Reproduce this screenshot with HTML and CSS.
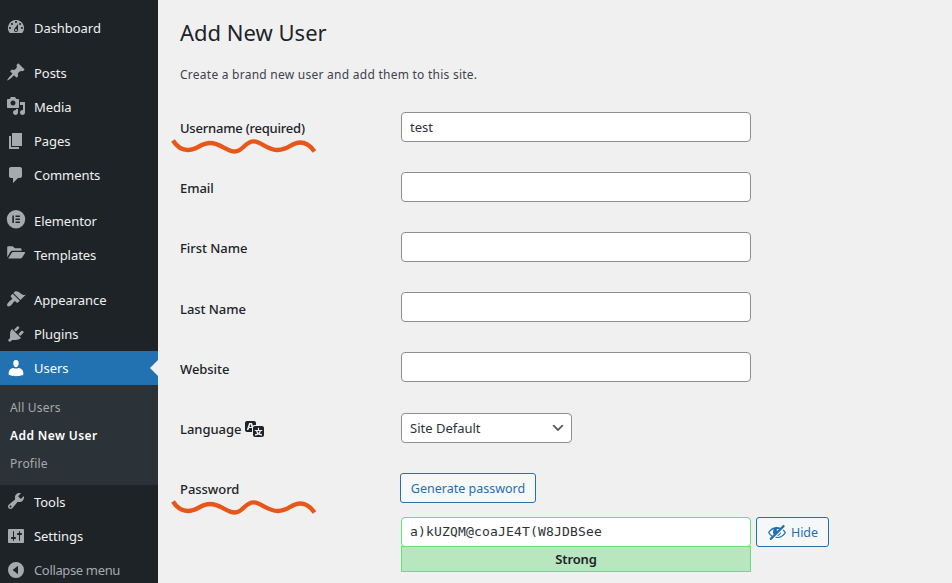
FILE: index.html
```html
<!DOCTYPE html>
<html lang="en">
<head>
    <meta charset="UTF-8">
    <meta name="viewport" content="width=device-width, initial-scale=1.0">
    <title>Add New User</title>
    <link rel="stylesheet" href="styles.css">
</head>
<body>
    <div class="wrapper">
        <!-- Admin menu -->
        <nav class="menu">
            <a class="menu-item">
                <svg class="icon" viewBox="0 0 20 20"><path d="M3.76 16h12.48A7.998 7.998 0 0 0 10 3a7.998 7.998 0 0 0-6.24 13zM10 4c.55 0 1 .45 1 1s-.45 1-1 1-1-.45-1-1 .45-1 1-1zM6 6c.55 0 1 .45 1 1s-.45 1-1 1-1-.45-1-1 .45-1 1-1zm8 0c.55 0 1 .45 1 1s-.45 1-1 1-1-.45-1-1 .45-1 1-1zm-5.37 5.55L12 7v6c0 1.1-.9 2-2 2s-2-.9-2-2c0-.57.24-1.08.63-1.45zM4 10c.55 0 1 .45 1 1s-.45 1-1 1-1-.45-1-1 .45-1 1-1zm12 0c.55 0 1 .45 1 1s-.45 1-1 1-1-.45-1-1 .45-1 1-1zm-5 3c0-.55-.45-1-1-1s-1 .45-1 1 .45 1 1 1 1-.45 1-1z"/></svg>
                <span>Dashboard</span>
            </a>
            <a class="menu-item group-start">
                <svg class="icon" viewBox="0 0 20 20"><path d="M10.44 3.02l1.82-1.82 6.36 6.35-1.83 1.82c-1.05-.68-2.48-.57-3.41.36l-.75.75c-.92.93-1.04 2.35-.35 3.41l-1.83 1.82-2.41-2.41-2.8 2.79c-.42.42-3.38 2.71-3.8 2.29s1.86-3.39 2.28-3.81l2.79-2.79L4.1 9.36l1.83-1.82c1.05.69 2.48.57 3.4-.36l.75-.75c.93-.92 1.05-2.35.36-3.41z"/></svg>
                <span>Posts</span>
            </a>
            <a class="menu-item">
                <svg class="icon" viewBox="0 0 20 20"><path d="M13 11V4c0-.55-.45-1-1-1h-1.67L9 1H5L3.67 3H2c-.55 0-1 .45-1 1v7c0 .55.45 1 1 1h10c.55 0 1-.45 1-1zM7 4.5c1.38 0 2.5 1.12 2.5 2.5S8.38 9.5 7 9.5 4.5 8.38 4.5 7 5.62 4.5 7 4.5zM14 6h5v10.5c0 1.38-1.12 2.5-2.5 2.5S14 17.88 14 16.5s1.12-2.5 2.5-2.5c.17 0 .34.02.5.05V9h-3V6zm-4 8.05V13h2v3.5c0 1.38-1.12 2.5-2.5 2.5S7 17.88 7 16.5 8.12 14 9.5 14c.17 0 .34.02.5.05z"/></svg>
                <span>Media</span>
            </a>
            <a class="menu-item">
                <svg class="icon low" viewBox="0 0 20 20"><path d="M6 15V2h10v13H6zm-1 1h8v2H3V5h2v11z"/></svg>
                <span>Pages</span>
            </a>
            <a class="menu-item">
                <svg class="icon low" viewBox="0 0 20 20"><path d="M5 2h9c1.1 0 2 .9 2 2v7c0 1.1-.9 2-2 2h-2l-5 5v-5H5c-1.1 0-2-.9-2-2V4c0-1.1.9-2 2-2z"/></svg>
                <span>Comments</span>
            </a>
            <a class="menu-item group-start wide">
                <svg class="icon" viewBox="0 0 20 20"><path fill-rule="evenodd" d="M10 0a9.2 9.2 0 1 0 0 18.4A9.2 9.2 0 0 0 10 0zM6.3 5.5h1.6v7.6H6.3zm3.2 0h4.4v1.5H9.5zm0 3.05h4.4v1.5H9.5zm0 3.05h4.4v1.5H9.5z"/></svg>
                <span>Elementor</span>
            </a>
            <a class="menu-item">
                <svg class="icon" viewBox="0 0 20 20"><path d="M1.2 13.2V3.6c0-.8.5-1.3 1.3-1.3h4.2l2.1 2h5.4c.8 0 1.3.5 1.3 1.3v1.1H6.7c-1 0-1.8.5-2.4 1.3zM2.2 14.4l3.6-5.7c.3-.5.7-.7 1.3-.7h11.4c.6 0 .8.4.5.9l-2.8 4.7c-.3.5-.7.8-1.3.8z"/></svg>
                <span>Templates</span>
            </a>
            <a class="menu-item group-start">
                <svg class="icon" viewBox="0 0 20 20"><path d="M14.48 11.06L7.41 3.99l1.5-1.5c.5-.56 2.3-.47 3.51.32 1.21.8 1.43 1.28 2.91 2.1 1.18.64 2.45 1.26 4.45.85zm-.71.71L6.7 4.7 4.93 6.47c-.39.39-.39 1.02 0 1.41l1.06 1.06c.39.39.39 1.03 0 1.42-.6.6-1.43 1.11-2.21 1.69-.35.26-.7.53-1.01.84C1.43 14.23.4 16.08 1.4 17.07c.99 1 2.84-.03 4.18-1.36.31-.31.58-.66.85-1.02.57-.78 1.08-1.61 1.69-2.21.39-.39 1.02-.39 1.41 0l1.06 1.06c.39.39 1.02.39 1.41 0z"/></svg>
                <span>Appearance</span>
            </a>
            <a class="menu-item">
                <svg class="icon low" viewBox="0 0 20 20"><path d="M13.11 4.36L9.87 7.6 8 5.73l3.24-3.24c.35-.34 1.05-.2 1.56.32.52.51.66 1.21.31 1.55zm-8 1.77l.91-1.12 9.01 9.01-1.19.84c-.71.71-2.63 1.16-3.82 1.16H6.14L4.9 17.26c-.59.59-1.54.59-2.12 0-.59-.58-.59-1.53 0-2.12l1.24-1.24v-3.88c0-1.13.4-3.19 1.09-3.89zm7.26 3.97l3.24-3.24c.34-.35 1.04-.21 1.55.31.52.51.66 1.21.31 1.55l-3.24 3.25z"/></svg>
                <span>Plugins</span>
            </a>
            <a class="menu-item current">
                <svg class="icon low" viewBox="0 0 20 20"><path d="M10 9.25c-2.27 0-2.73-3.44-2.73-3.44C7 4.02 7.82 2 9.97 2c2.16 0 2.98 2.02 2.71 3.81 0 0-.41 3.44-2.68 3.44zM7.2 9.9Q10 11.2 12.8 9.9C15.2 10 17.3 12.3 17.3 14.53v2.49s-3.65 1.13-7.3 1.13-7.3-1.13-7.3-1.13v-2.49c0-2.25 2-4.48 4.5-4.63z"/></svg>
                <span>Users</span>
            </a>
            <div class="submenu">
                <a>All Users</a>
                <a class="active">Add New User</a>
                <a>Profile</a>
            </div>
            <a class="menu-item">
                <svg class="icon" viewBox="0 0 20 20"><path d="M16.68 9.77c-1.34 1.34-3.3 1.67-4.95.99l-5.41 6.52c-.99.99-2.59.99-3.58 0s-.99-2.59 0-3.57l6.52-5.42c-.68-1.65-.35-3.61.99-4.95 1.28-1.28 3.12-1.62 4.72-1.06l-2.89 2.89 2.82 2.82 2.86-2.87c.53 1.58.18 3.39-1.08 4.65zM3.81 16.21c.4.39 1.04.39 1.43 0 .4-.4.4-1.04 0-1.43-.39-.4-1.03-.4-1.43 0-.39.39-.39 1.03 0 1.43z"/></svg>
                <span>Tools</span>
            </a>
            <a class="menu-item">
                <svg class="icon low" viewBox="0 0 20 20"><path d="M18 16V4c0-.55-.45-1-1-1H3c-.55 0-1 .45-1 1v12c0 .55.45 1 1 1h14c.55 0 1-.45 1-1zM8 11h1c.55 0 1 .45 1 1s-.45 1-1 1H8v1.5c0 .28-.22.5-.5.5s-.5-.22-.5-.5V13H6c-.55 0-1-.45-1-1s.45-1 1-1h1V5.5c0-.28.22-.5.5-.5s.5.22.5.5V11zm5-2h-1c-.55 0-1-.45-1-1s.45-1 1-1h1V5.5c0-.28.22-.5.5-.5s.5.22.5.5V7h1c.55 0 1 .45 1 1s-.45 1-1 1h-1v5.5c0 .28-.22.5-.5.5s-.5-.22-.5-.5V9z"/></svg>
                <span>Settings</span>
            </a>
            <a class="menu-item collapse">
                <svg class="icon low" viewBox="0 0 20 20"><path fill-rule="evenodd" d="M10 2a8 8 0 1 0 0 16 8 8 0 0 0 0-16zM12 5.8v8.4L6.6 10z"/></svg>
                <span>Collapse menu</span>
            </a>
        </nav>

        <main class="content">
            <h1>Add New User</h1>
            <p class="description">Create a brand new user and add them to this site.</p>

            <form class="form-table">
                <div class="form-row">
                    <label class="required" for="username">Username (required)
                        <svg class="squiggle" viewBox="0 0 148 18"><path d="M3 4.5C7 11 12 14 18 14C27 14 31 7 40 7C51 7 56 15.5 65 15.5C73 15.5 75 5.3 83.5 5.3C91 5.3 97 14 108 14C118 14 122 6.5 130 6.5C136 6.5 140 9 144.5 15.5"/></svg>
                    </label>
                    <input type="text" id="username" value="test">
                </div>
                <div class="form-row">
                    <label for="email">Email</label>
                    <input type="text" id="email">
                </div>
                <div class="form-row">
                    <label for="firstName">First Name</label>
                    <input type="text" id="firstName">
                </div>
                <div class="form-row">
                    <label for="lastName">Last Name</label>
                    <input type="text" id="lastName">
                </div>
                <div class="form-row">
                    <label for="website">Website</label>
                    <input type="text" id="website">
                </div>
                <div class="form-row">
                    <label for="locale">Language
                        <svg class="translate-icon" viewBox="0 0 20 20"><path d="M11 7H9.49c-.63 0-1.25.3-1.59.7L7 5H4.13l-2.39 7h1.69l.74-2H7v4H2c-1.1 0-2-.9-2-2V5c0-1.1.9-2 2-2h7c1.1 0 2 .9 2 2v2zM6.51 9H4.49l1-2.93zM10 8h7c1.1 0 2 .9 2 2v7c0 1.1-.9 2-2 2h-7c-1.1 0-2-.9-2-2v-7c0-1.1.9-2 2-2zm7.25 5v-1.08h-3.17V9.75h-1.16v2.17H9.75V13h1.28c.11.85.56 1.85 1.28 2.62-.87.36-1.89.62-2.31.62-.01.02.22.97.2 1.46.84 0 2.21-.5 3.28-1.15 1.09.65 2.48 1.15 3.34 1.15-.02-.49.2-1.44.2-1.46-.43 0-1.49-.27-2.38-.63.7-.77 1.14-1.77 1.25-2.61h1.36zm-3.81 1.93c-.5-.46-.85-1.13-1.01-1.93h2.09c-.17.8-.51 1.47-1 1.93l-.04.03s-.03-.02-.04-.03z"/></svg>
                    </label>
                    <select id="locale">
                        <option>Site Default</option>
                    </select>
                </div>
                <div class="form-row">
                    <label for="password">Password
                        <svg class="squiggle" viewBox="0 0 148 18"><path d="M3 4.5C7 11 12 14 18 14C27 14 31 7 40 7C51 7 56 15.5 65 15.5C73 15.5 75 5.3 83.5 5.3C91 5.3 97 14 108 14C118 14 122 6.5 130 6.5C136 6.5 140 9 144.5 15.5"/></svg>
                    </label>
                    <div class="password-area">
                        <button type="button" class="generate">Generate password</button>
                        <div class="password-line">
                            <div class="password-field">
                                <input type="text" id="password" value="a)kUZQM@coaJE4T(W8JDBSee">
                                <div class="strength">Strong</div>
                            </div>
                            <button type="button" class="hide">
                                <svg class="hide-icon" viewBox="0 0 20 20"><path d="M17.2 3.3l.16.17c.39.39.39 1.02 0 1.41L4.55 17.7c-.39.39-1.03.39-1.41 0l-.17-.17c-.39-.39-.39-1.02 0-1.41l1.59-1.6c-1.57-1-2.76-2.3-3.56-3.93.81-1.65 2.03-2.98 3.64-3.99S8.04 5.09 10 5.09c1.2 0 2.33.21 3.4.6l2.38-2.39c.39-.39 1.03-.39 1.42 0zm-7.09 4.01c-.23.25-.34.54-.34.88 0 .31.12.58.31.81l1.8-1.79c-.13-.12-.28-.21-.45-.26-.11-.01-.28-.03-.49-.04-.33.03-.6.16-.83.4zM2.4 10.59c.69 1.23 1.71 2.25 3.05 3.05l1.28-1.28c-.51-.69-.77-1.47-.77-2.36 0-1.06.36-1.98 1.09-2.76-1.04.27-1.96.7-2.76 1.26-.8.58-1.43 1.27-1.89 2.09zm13.22-2.13l.96-.96c1.02.86 1.83 1.89 2.42 3.09-.81 1.65-2.03 2.98-3.64 3.99s-3.4 1.51-5.36 1.51c-.63 0-1.24-.07-1.83-.18l1.07-1.07c.25.02.5.05.76.05 1.63 0 3.13-.4 4.5-1.21s2.4-1.84 3.1-3.09c-.46-.82-1.09-1.51-1.89-2.09-.04-.01-.08-.03-.13-.04zm-5.58 5.58l4-4c-.01 1.1-.41 2.04-1.18 2.81-.78.78-1.72 1.18-2.82 1.19z"/></svg>
                                <span>Hide</span>
                            </button>
                        </div>
                    </div>
                </div>
            </form>
        </main>
    </div>
</body>
</html>
```

FILE: styles.css
```css
* {
    margin: 0;
    padding: 0;
    box-sizing: border-box;
}

body {
    background: #f0f0f1;
    color: #3c434a;
    font-family: "Noto Sans", "Open Sans", sans-serif;
    font-size: 13px;
    overflow: hidden;
}

.wrapper {
    display: flex;
    height: 583px;
    overflow: hidden;
}

/* Admin menu */
.menu {
    flex: none;
    width: 158px;
    padding-top: 11px;
    background: #1d2327;
}

.menu-item {
    position: relative;
    display: flex;
    align-items: center;
    gap: 8px;
    height: 34px;
    padding-left: 6px;
    color: #f0f0f1;
    line-height: 18px;
    letter-spacing: -0.05px;
    cursor: pointer;
}

.group-start {
    margin-top: 11px;
}

.group-start.wide {
    margin-top: 12px;
}

.icon {
    flex: none;
    width: 20px;
    height: 20px;
    margin-top: -2px;
    fill: #a7aaad;
}

.icon.low {
    margin-top: 0;
}

.menu-item.current {
    background: #2271b1;
    color: #fff;
}

.menu-item.current .icon {
    fill: #fff;
}

.menu-item.current::after {
    content: "";
    position: absolute;
    right: 0;
    top: 9px;
    border: 8px solid transparent;
    border-left: none;
    border-right-color: #f0f0f1;
}

.submenu {
    height: 100px;
    padding: 9px 10px;
    background: #2c3338;
}

.submenu a {
    display: block;
    color: #a7aaad;
    font-size: 12px;
    line-height: 28px;
    letter-spacing: 0.2px;
}

.submenu a.active {
    color: #fff;
    font-weight: 600;
    letter-spacing: 0.4px;
}

.menu-item.collapse {
    color: #a7aaad;
    letter-spacing: -0.35px;
}

/* Page content */
.content {
    flex: 1;
    padding: 17px 22px 0;
}

h1 {
    color: #1d2327;
    font-size: 22px;
    font-weight: 400;
    line-height: 30px;
}

.description {
    margin-top: 18px;
    font-size: 12px;
    line-height: 20px;
    letter-spacing: 0.25px;
}

.form-table {
    margin-top: 27px;
}

.form-row {
    display: flex;
    align-items: flex-start;
    height: 60.12px;
}

label {
    position: relative;
    width: 221px;
    padding-top: 7.2px;
    color: #1d2327;
    font-weight: 500;
    line-height: 18px;
    letter-spacing: -0.05px;
}

label.required {
    letter-spacing: -0.22px;
}

.squiggle {
    position: absolute;
    left: -10px;
    top: 24.4px;
    width: 148px;
    height: 18px;
    fill: none;
    stroke: #e8571a;
    stroke-width: 4.3;
}

.translate-icon {
    width: 20px;
    height: 20px;
    margin: -8px 0 -3px 0;
    vertical-align: middle;
    fill: #1d2327;
}

input, select {
    width: 350px;
    height: 30px;
    padding: 0 8px;
    border: 1px solid #8c8f94;
    border-radius: 4px;
    background-color: #fff;
    color: #2c3338;
    font-family: inherit;
    font-size: 13px;
}

select {
    appearance: none;
    width: 171px;
    background-image: url("data:image/svg+xml,%3Csvg xmlns='http://www.w3.org/2000/svg' viewBox='0 0 20 20'%3E%3Cpath d='M5 6l5 5 5-5 2 1-7 7-7-7 2-1z' fill='%23555'/%3E%3C/svg%3E");
    background-repeat: no-repeat;
    background-position: right 5px center;
    background-size: 16px 16px;
}

button {
    height: 30px;
    padding-top: 1px;
    border: 1px solid #2271b1;
    border-radius: 3px;
    background: #f6f7f7;
    color: #2271b1;
    font-family: inherit;
    font-size: 12.5px;
    cursor: pointer;
}

.generate {
    width: 136px;
    margin-left: -1px;
}

.password-line {
    display: flex;
    align-items: flex-start;
    gap: 5px;
    margin-top: 14px;
}

.password-field {
    width: 350px;
}

.password-field input {
    display: block;
    padding-bottom: 1px;
    border-color: #68de7c;
    font-family: "DejaVu Sans Mono", monospace;
    letter-spacing: 0.17px;
}

.strength {
    height: 26px;
    margin-top: -1px;
    border: 1px solid #68de7c;
    background: #b8e6bf;
    color: #1d2327;
    font-weight: 600;
    line-height: 24px;
    text-align: center;
    letter-spacing: -0.1px;
}

.hide {
    display: flex;
    align-items: center;
    justify-content: center;
    gap: 4px;
    width: 73px;
}

.hide-icon {
    width: 20px;
    height: 20px;
    fill: #2271b1;
}
```
